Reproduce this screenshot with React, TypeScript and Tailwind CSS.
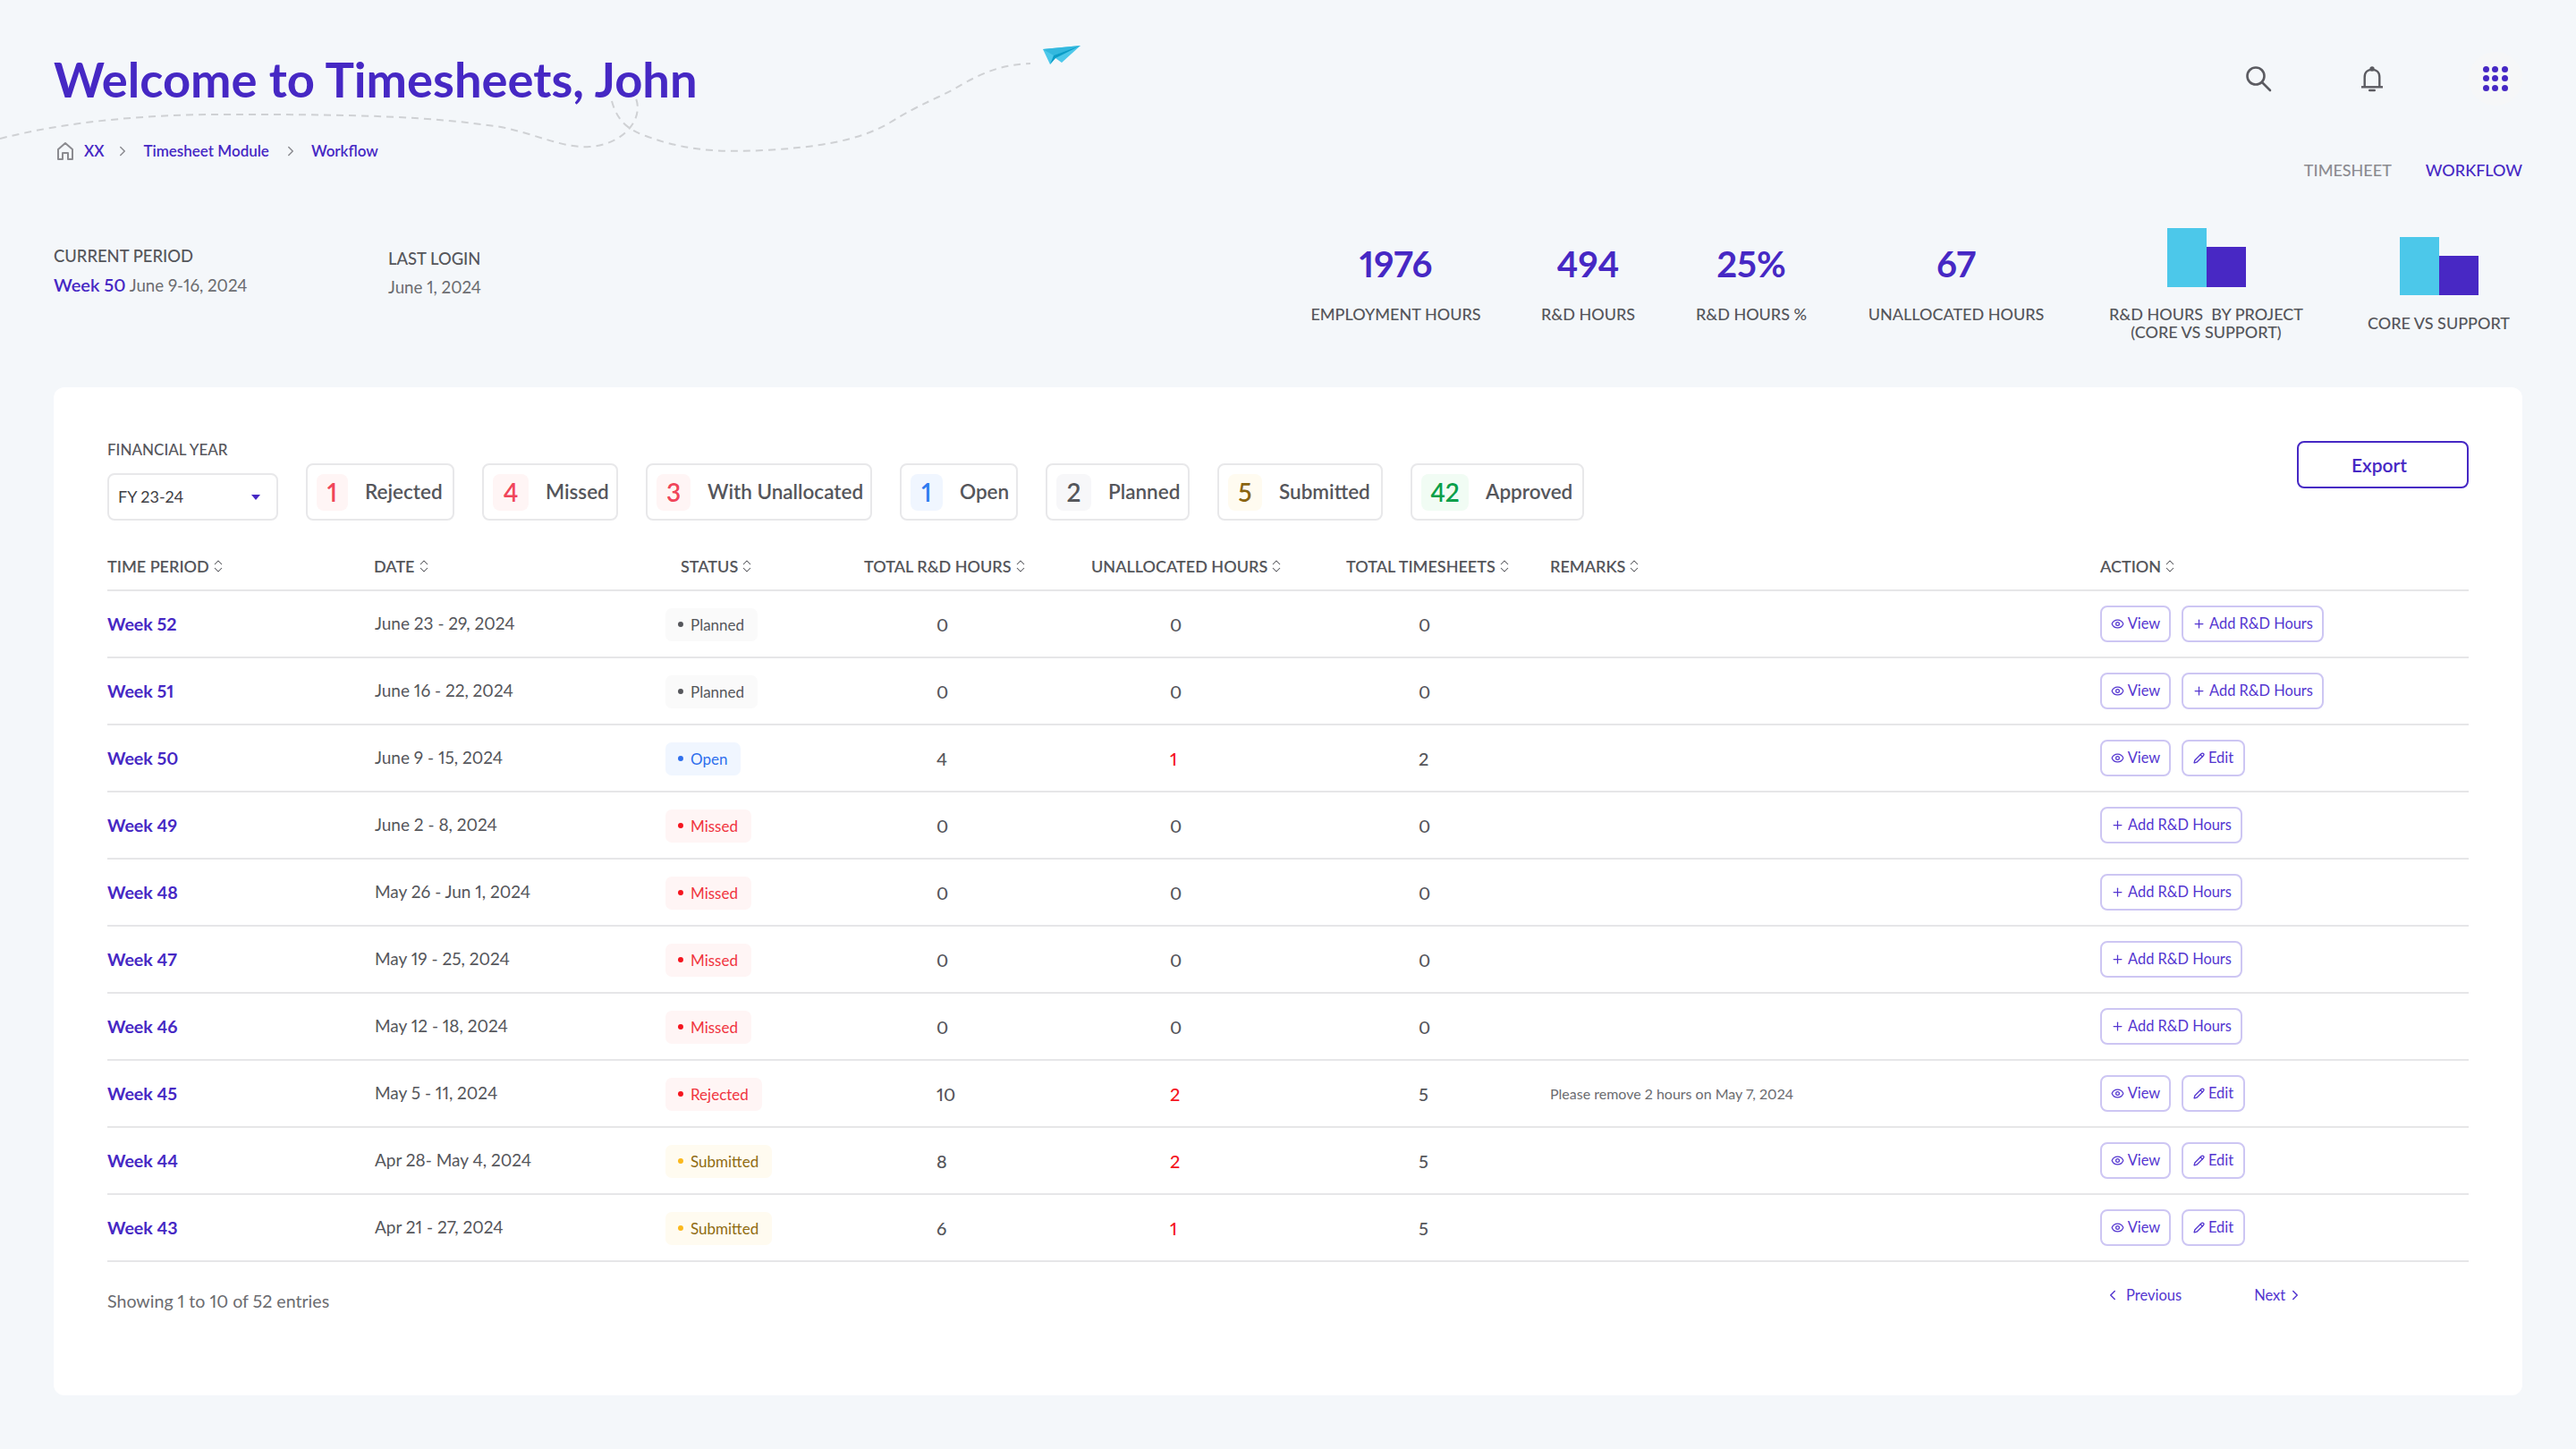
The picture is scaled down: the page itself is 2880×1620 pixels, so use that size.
import { ChevronLeft, ChevronRight, ChevronsUpDown, Eye, Pencil, Plus } from "lucide-react";

type Status = "Planned" | "Open" | "Missed" | "Rejected" | "Submitted";

type Row = {
  week: string;
  date: string;
  status: Status;
  rd: number;
  unallocated: number;
  total: number;
  remarks?: string;
  actions: "view-add" | "view-edit" | "add";
};

const rows: Row[] = [
  { week: "Week 52", date: "June 23 - 29, 2024", status: "Planned", rd: 0, unallocated: 0, total: 0, actions: "view-add" },
  { week: "Week 51", date: "June 16 - 22, 2024", status: "Planned", rd: 0, unallocated: 0, total: 0, actions: "view-add" },
  { week: "Week 50", date: "June 9 - 15, 2024", status: "Open", rd: 4, unallocated: 1, total: 2, actions: "view-edit" },
  { week: "Week 49", date: "June 2 - 8, 2024", status: "Missed", rd: 0, unallocated: 0, total: 0, actions: "add" },
  { week: "Week 48", date: "May 26 - Jun 1, 2024", status: "Missed", rd: 0, unallocated: 0, total: 0, actions: "add" },
  { week: "Week 47", date: "May 19 - 25, 2024", status: "Missed", rd: 0, unallocated: 0, total: 0, actions: "add" },
  { week: "Week 46", date: "May 12 - 18, 2024", status: "Missed", rd: 0, unallocated: 0, total: 0, actions: "add" },
  { week: "Week 45", date: "May 5 - 11, 2024", status: "Rejected", rd: 10, unallocated: 2, total: 5, remarks: "Please remove 2 hours on May 7, 2024", actions: "view-edit" },
  { week: "Week 44", date: "Apr 28- May 4, 2024", status: "Submitted", rd: 8, unallocated: 2, total: 5, actions: "view-edit" },
  { week: "Week 43", date: "Apr 21 - 27, 2024", status: "Submitted", rd: 6, unallocated: 1, total: 5, actions: "view-edit" },
];

const statusStyles: Record<Status, { badge: string; dot: string }> = {
  Planned: { badge: "bg-[#fafafa] text-[#55565b]", dot: "bg-[#55565b]" },
  Open: { badge: "bg-[#f0f6ff] text-[#2f6fed]", dot: "bg-[#2f6fed]" },
  Missed: { badge: "bg-[#fff5f5] text-[#f0353f]", dot: "bg-[#f5141e]" },
  Rejected: { badge: "bg-[#fff5f5] text-[#f0353f]", dot: "bg-[#f5141e]" },
  Submitted: { badge: "bg-[#fffbf0] text-[#8f6b12]", dot: "bg-[#fbb81c]" },
};

const chips = [
  { count: "1", label: "Rejected", box: "bg-[#fff5f5] text-[#f0455a]", w: "w-[166px]", boxW: "w-[35px]" },
  { count: "4", label: "Missed", box: "bg-[#fff5f5] text-[#f0455a]", w: "w-[152px]", boxW: "w-[40px]" },
  { count: "3", label: "With Unallocated", box: "bg-[#fff5f5] text-[#f0455a]", w: "w-[253px]", boxW: "w-[38px]" },
  { count: "1", label: "Open", box: "bg-[#f0f6ff] text-[#2f7bf0]", w: "w-[132px]", boxW: "w-[36px]" },
  { count: "2", label: "Planned", box: "bg-[#f7f7f9] text-[#55565b]", w: "w-[161px]", boxW: "w-[39px]" },
  { count: "5", label: "Submitted", box: "bg-[#fffbf0] text-[#8a6410]", w: "w-[185px]", boxW: "w-[38px]" },
  { count: "42", label: "Approved", box: "bg-[#f1fcf4] text-[#0a9f4a]", w: "w-[194px]", boxW: "w-[53px]" },
];

const columns = "grid grid-cols-[298px_326px_222px_254px_285px_228px_615px_412px]";

function SortHeader({ label, className = "" }: { label: string; className?: string }) {
  return (
    <div className={`flex items-center gap-[1px] ${className}`}>
      <span>{label}</span>
      <ChevronsUpDown size={18} strokeWidth={1.4} className="text-[#55565b]" />
    </div>
  );
}

function RowButton({ kind }: { kind: "view" | "add" | "edit" }) {
  const size = kind === "view" ? "w-[79px]" : kind === "add" ? "w-[159px]" : "w-[71px]";
  return (
    <button className={`${size} h-[41px] flex items-center justify-center gap-[4px] rounded-[8px] border-2 border-[#cdc6f3] bg-white text-[16.4px] text-[#5436d0]`}>
      {kind === "view" && <Eye size={15} strokeWidth={2} />}
      {kind === "add" && <Plus size={15} strokeWidth={2} />}
      {kind === "edit" && <Pencil size={13} strokeWidth={2.4} />}
      <span>{kind === "view" ? "View" : kind === "add" ? "Add R&D Hours" : "Edit"}</span>
    </button>
  );
}

function Stat({ value, label, width }: { value: string; label: string; width: string }) {
  return (
    <div className={`${width} pt-[17px] flex flex-col items-center whitespace-nowrap`}>
      <div className="h-[46px] leading-[46px] text-[40px] font-bold text-[#4628c4]">{value}</div>
      <div className="mt-[22px] h-[22px] leading-[22px] text-[18px] font-medium text-[#55565b]">{label}</div>
    </div>
  );
}

function Bars({ tall, short }: { tall: string; short: string }) {
  return (
    <div className="flex items-end">
      <div className={`w-[44px] ${tall} bg-[#4cc8ea]`} />
      <div className={`w-[44px] ${short} bg-[#4828c4]`} />
    </div>
  );
}

export default function App() {
  return (
    <div className="relative min-h-[1620px] bg-[#f4f7fa] px-[60px] font-['Lato','Liberation_Sans',sans-serif] proportional-nums">
      {/* flight path behind the header */}
      <svg className="absolute left-0 top-0 pointer-events-none" width="1220" height="180" viewBox="0 0 1220 180" fill="none">
        <path
          d="M0 155 C 90 132 190 127 274 128 C 400 128 480 130 560 142 C 600 150 630 166 659 164 C 695 162 720 135 711 110 M684 113 C 690 135 702 145 722 152 C 770 170 810 170 854 168 C 910 165 960 158 995 137 C 1030 115 1050 110 1078 93 C 1105 78 1125 72 1152 71"
          stroke="#cfd1d4"
          strokeWidth="2"
          strokeDasharray="8 6"
        />
        <polygon points="1166,55 1208,51 1187,70 1180,65 1174,72" fill="#4cc8ea" />
        <polygon points="1166,55 1208,51 1178,62" fill="#33b8de" />
        <polygon points="1178,62 1208,51 1180,65 1174,72" fill="#0b9cc6" />
      </svg>

      <header className="relative h-[433px]">
        <div className="flex items-start justify-between pt-[58px]">
          <div>
            <h1 className="h-[60px] leading-[60px] text-[54.3px] font-bold text-[#4628c4]">Welcome to Timesheets, John</h1>
            <nav className="mt-[39px] h-[24px] flex items-center text-[17px] font-semibold text-[#4628c4]">
              <svg width="20" height="22" viewBox="0 0 20 22" fill="none" stroke="#8b8b90" strokeWidth="2" className="ml-[3px]">
                <path d="M2 20V9l8-7 8 7v11h-5v-7H7v7z" strokeLinejoin="round" />
              </svg>
              <span className="ml-[11px]">XX</span>
              <ChevronRight size={18} strokeWidth={2} className="ml-[12px] mr-[14px] text-[#8b8b90]" />
              <span>Timesheet Module</span>
              <ChevronRight size={18} strokeWidth={2} className="ml-[15px] mr-[14px] text-[#8b8b90]" />
              <span>Workflow</span>
            </nav>
          </div>
          <div className="flex flex-col items-end">
            <div className="h-[60px] flex items-center">
              <svg width="30" height="30" viewBox="0 0 30 30" fill="none" stroke="#5b5b61" strokeWidth="2.6" strokeLinecap="round">
                <circle cx="12" cy="12" r="9.5" />
                <path d="M19 19l9 9" />
              </svg>
              <svg width="24" height="30" viewBox="0 0 26 32" fill="none" stroke="#5b5b61" strokeWidth="2.6" className="ml-[100px] mt-[2px]">
                <path d="M4 25V13c0-6 4-9 9-9s9 3 9 9v12" />
                <path d="M0 25h26" />
                <circle cx="13" cy="3" r="1.6" fill="#5b5b61" />
                <path d="M10 29h6" strokeLinecap="round" />
              </svg>
              <div className="ml-[96px] w-[60px] h-[60px] rounded-full bg-[#f6f7f8] grid grid-cols-3 place-items-center p-[14px]">
                {[0, 1, 2, 3, 4, 5, 6, 7, 8].map((i) => (
                  <span key={i} className="w-[7px] h-[7px] rounded-full bg-[#4628c4]" />
                ))}
              </div>
            </div>
            <div className="mt-[60px] flex gap-[38px] text-[18px] font-medium leading-[24px]">
              <span className="text-[#8b8b90]">TIMESHEET</span>
              <span className="text-[#4628c4]">WORKFLOW</span>
            </div>
          </div>
        </div>

        <div className="absolute inset-x-0 top-[255px] flex items-start">
          <div className="w-[374px] pt-[19px]">
            <div className="text-[18.4px] leading-[24px] font-medium text-[#55565b]">CURRENT PERIOD</div>
            <div className="mt-[8px] text-[18.7px] leading-[24px] text-[#6b6c70]">
              <span className="text-[20px] font-semibold text-[#4628c4]">Week 50</span> June 9-16, 2024
            </div>
          </div>
          <div className="pt-[22px]">
            <div className="text-[18.4px] leading-[24px] font-medium text-[#55565b]">LAST LOGIN</div>
            <div className="mt-[8px] text-[18.7px] leading-[24px] text-[#6b6c70]">June 1, 2024</div>
          </div>
          <div className="ml-auto flex gap-[67px]">
            <Stat value="1976" label="EMPLOYMENT HOURS" width="w-[189px]" />
            <Stat value="494" label="R&D HOURS" width="w-[107px]" />
            <Stat value="25%" label="R&D HOURS %" width="w-[124px]" />
            <Stat value="67" label="UNALLOCATED HOURS" width="w-[200px]" />
            <div className="w-[219px] ml-[3px] flex flex-col items-center text-center text-[18px] leading-[20px] font-medium text-[#55565b]">
              <Bars tall="h-[66px]" short="h-[45px]" />
              <div className="mt-[20px] whitespace-nowrap">
                R&D HOURS&nbsp; BY PROJECT
                <br />
                (CORE VS SUPPORT)
              </div>
            </div>
            <div className="w-[163px] ml-[2px] mr-[12px] pt-[10px] flex flex-col items-center text-[18px] leading-[22px] font-medium text-[#55565b]">
              <Bars tall="h-[65px]" short="h-[44px]" />
              <div className="mt-[20px] whitespace-nowrap">CORE VS SUPPORT</div>
            </div>
          </div>
        </div>
      </header>

      <main className="h-[1127px] rounded-[12px] bg-white px-[60px]">
        <div className="flex items-start justify-between pt-[60px]">
          <div className="flex items-end gap-[31px]">
            <div>
              <div className="mb-[16px] text-[17px] leading-[20px] font-medium text-[#55565b]">FINANCIAL YEAR</div>
              <div className="w-[191px] h-[53px] pl-[10px] pr-[18px] flex items-center justify-between rounded-[8px] border-2 border-[#e8e8ea] text-[18px] text-[#3f3f44]">
                <span>FY 23-24</span>
                <span className="w-0 h-0 border-x-[5px] border-t-[6px] border-x-transparent border-t-[#4628c4]" />
              </div>
            </div>
            {chips.map((chip) => (
              <div key={chip.label} className={`${chip.w} h-[64px] pl-[10px] flex items-center rounded-[8px] border-2 border-[#e8e8ea]`}>
                <span className={`${chip.boxW} h-[41px] flex items-center justify-center rounded-[8px] text-[28px] font-semibold ${chip.box}`}>{chip.count}</span>
                <span className="ml-[19px] text-[22.5px] font-semibold text-[#55565b] whitespace-nowrap">{chip.label}</span>
              </div>
            ))}
          </div>
          <button className="w-[192px] h-[53px] pr-[8px] rounded-[8px] border-2 border-[#4628c4] text-[21px] font-semibold text-[#4628c4]">Export</button>
        </div>

        <div className={`${columns} mt-[35px] h-[44px] items-center border-b-2 border-[#e6e6e8] pb-[10px] text-[18px] font-semibold text-[#55565b]`}>
          <SortHeader label="TIME PERIOD" />
          <SortHeader label="DATE" />
          <SortHeader label="STATUS" className="pl-[17px]" />
          <SortHeader label="TOTAL R&D HOURS" />
          <SortHeader label="UNALLOCATED HOURS" />
          <SortHeader label="TOTAL TIMESHEETS" />
          <SortHeader label="REMARKS" />
          <SortHeader label="ACTION" />
        </div>

        {rows.map((row) => (
          <div key={row.week} className={`${columns} h-[75px] items-center border-b-2 border-[#e6e6e8] text-[20px] text-[#55565b]`}>
            <div className="text-[19.6px] font-bold text-[#4628c4]">{row.week}</div>
            <div className="text-[19px] pl-[1px]">{row.date}</div>
            <div>
              <span className={`inline-flex h-[37px] items-center gap-[8px] rounded-[7px] pl-[14px] pr-[15px] text-[17px] ${statusStyles[row.status].badge}`}>
                <span className={`w-[6px] h-[6px] rounded-full ${statusStyles[row.status].dot}`} />
                {row.status}
              </span>
            </div>
            <div className="pl-[81px] font-medium">{row.rd}</div>
            <div className={`pl-[88px] font-medium ${row.unallocated > 0 ? "text-[#f5141e]" : ""}`}>{row.unallocated}</div>
            <div className="pl-[81px] font-medium">{row.total}</div>
            <div className="text-[16px] text-[#6b6c70]">{row.remarks}</div>
            <div className="flex gap-[12px]">
              {row.actions !== "add" && <RowButton kind="view" />}
              {row.actions !== "view-edit" && <RowButton kind="add" />}
              {row.actions === "view-edit" && <RowButton kind="edit" />}
            </div>
          </div>
        ))}

        <div className="relative flex items-start justify-between">
          <div className="mt-[30px] text-[19.6px] leading-[28px] text-[#6b6c70]">Showing 1 to 10 of 52 entries</div>
          <div className="absolute left-[2238px] top-[26px] flex items-center text-[16.5px] leading-[22px] text-[#5436d0]">
            <ChevronLeft size={18} strokeWidth={2} className="-ml-[5px]" />
            <span className="ml-[6px]">Previous</span>
            <span className="ml-[81px]">Next</span>
            <ChevronRight size={18} strokeWidth={2} className="ml-[2px]" />
          </div>
        </div>
      </main>
    </div>
  );
}
